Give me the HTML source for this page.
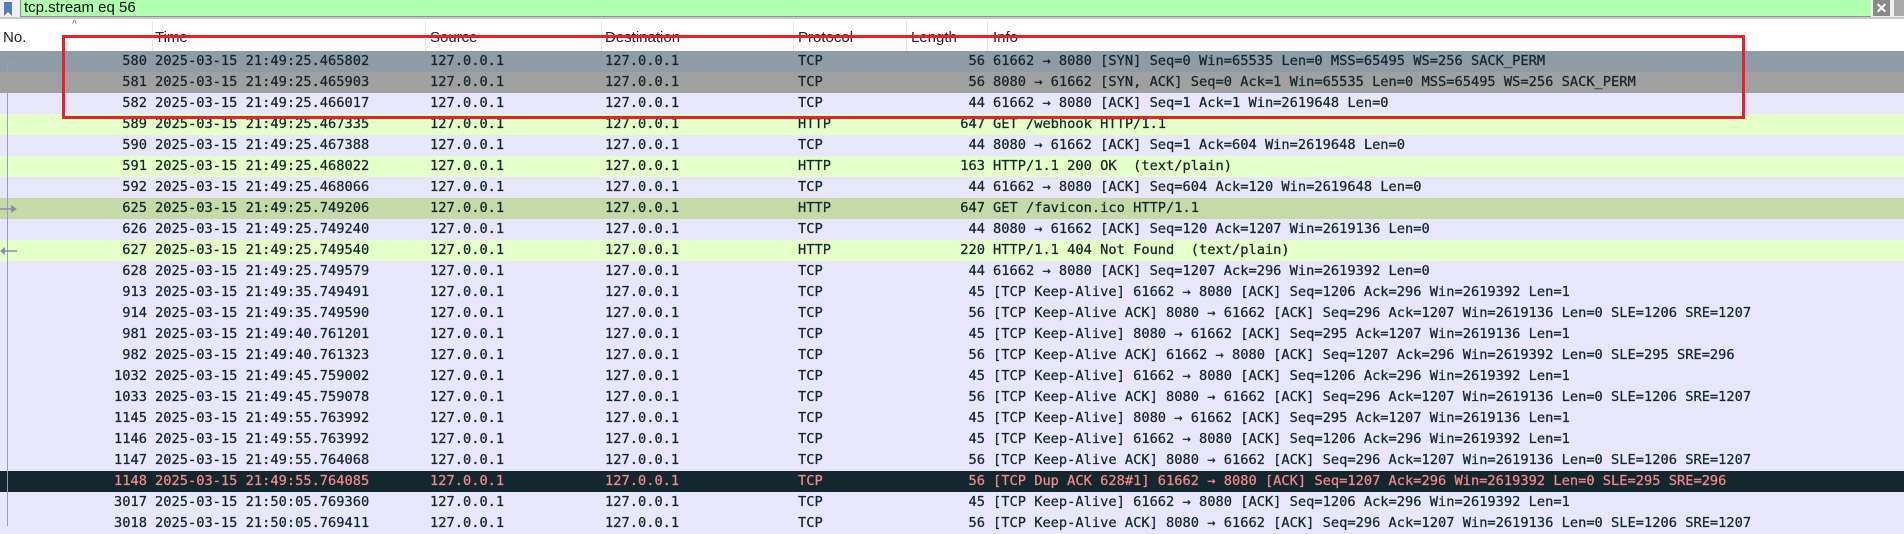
<!DOCTYPE html>
<html><head><meta charset="utf-8"><style>
*{margin:0;padding:0;box-sizing:border-box}
body{width:1904px;height:526px;overflow:hidden;background:#e7e6fa;position:relative;font-family:"DejaVu Sans Mono","Liberation Mono",monospace}
#fb{position:absolute;left:0;top:0;width:1904px;height:19px;background:#f0f0f0;border-bottom:2px solid #c8c8d0}
#fin{position:absolute;left:20px;top:0;width:1851px;height:17px;background:#afffaf;border-bottom:1px solid #909090;border-left:1px solid #909090;font:15px "Liberation Sans",sans-serif;color:#111;padding-left:3px;line-height:16px}
#hdr{position:absolute;left:0;top:19px;width:1904px;height:32px;background:#fff;font:15px "Liberation Sans",sans-serif;color:#222}
.h{position:absolute;top:10px}
.sep{position:absolute;top:2px;width:1px;height:30px;background:#e6e6e6}
.r{position:absolute;left:0;width:1904px;height:21px;font-size:13.7px;line-height:21px;color:#12272e;white-space:pre;-webkit-text-stroke:0.25px}
.r span{position:absolute;top:0}
.n{right:1757px;text-align:right}
</style></head><body>
<div id="fb">
<svg style="position:absolute;left:2px;top:1px" width="12" height="16"><path d="M2 1h8v14l-4-4-4 4z" fill="#4f7fc0"/></svg>
<div id="fin">tcp.stream eq 56</div>
<div style="position:absolute;left:1873px;top:0;width:17px;height:16px;background:#8a8a8a;color:#fff;font:bold 14px 'Liberation Sans',sans-serif;text-align:center;line-height:16px">✕</div>
<div style="position:absolute;left:1894px;top:0;width:10px;height:16px;background:#aaa"></div>
</div>
<div id="hdr">
<div class="h" style="left:3px">No.</div>
<div style="position:absolute;left:72px;top:0;font-size:10px;color:#666">^</div>
<div class="sep" style="left:152px"></div><div class="h" style="left:155px">Time</div>
<div class="sep" style="left:425px"></div><div class="h" style="left:430px">Source</div>
<div class="sep" style="left:601px"></div><div class="h" style="left:605px">Destination</div>
<div class="sep" style="left:793px"></div><div class="h" style="left:798px">Protocol</div>
<div class="sep" style="left:906px"></div><div class="h" style="left:911px">Length</div>
<div class="sep" style="left:987px"></div><div class="h" style="left:993px">Info</div>
</div>
<div id="rows"></div>
<div style="position:absolute;left:7px;top:63px;width:1px;height:463px;background:#9c9cb4"></div>
<div style="position:absolute;left:7px;top:62px;width:9px;height:1px;background:#9c9cb4"></div>
<svg style="position:absolute;left:0;top:204px" width="18" height="10"><path d="M0 5h12" stroke="#8c8ca0" stroke-width="1.5"/><path d="M11 1l6 4-6 4z" fill="#8c8ca0"/></svg>
<svg style="position:absolute;left:0;top:246px" width="18" height="10"><path d="M4 5h13" stroke="#8c8ca0" stroke-width="1.5"/><path d="M5 1l-5 4 5 4z" fill="#8c8ca0"/></svg>
<div style="position:absolute;left:62px;top:35px;width:1683px;height:84px;border:3px solid #e8202a"></div>
<script>
var d=[
["580","21:49:25.465802","TCP","56","61662 → 8080 [SYN] Seq=0 Win=65535 Len=0 MSS=65495 WS=256 SACK_PERM","#8f9ba5"],
["581","21:49:25.465903","TCP","56","8080 → 61662 [SYN, ACK] Seq=0 Ack=1 Win=65535 Len=0 MSS=65495 WS=256 SACK_PERM","#a0a0a0"],
["582","21:49:25.466017","TCP","44","61662 → 8080 [ACK] Seq=1 Ack=1 Win=2619648 Len=0","#e7e6fa"],
["589","21:49:25.467335","HTTP","647","GET /webhook HTTP/1.1","#e4ffc7"],
["590","21:49:25.467388","TCP","44","8080 → 61662 [ACK] Seq=1 Ack=604 Win=2619648 Len=0","#e7e6fa"],
["591","21:49:25.468022","HTTP","163","HTTP/1.1 200 OK  (text/plain)","#e4ffc7"],
["592","21:49:25.468066","TCP","44","61662 → 8080 [ACK] Seq=604 Ack=120 Win=2619648 Len=0","#e7e6fa"],
["625","21:49:25.749206","HTTP","647","GET /favicon.ico HTTP/1.1","#c4dba8"],
["626","21:49:25.749240","TCP","44","8080 → 61662 [ACK] Seq=120 Ack=1207 Win=2619136 Len=0","#e7e6fa"],
["627","21:49:25.749540","HTTP","220","HTTP/1.1 404 Not Found  (text/plain)","#e4ffc7"],
["628","21:49:25.749579","TCP","44","61662 → 8080 [ACK] Seq=1207 Ack=296 Win=2619392 Len=0","#e7e6fa"],
["913","21:49:35.749491","TCP","45","[TCP Keep-Alive] 61662 → 8080 [ACK] Seq=1206 Ack=296 Win=2619392 Len=1","#e7e6fa"],
["914","21:49:35.749590","TCP","56","[TCP Keep-Alive ACK] 8080 → 61662 [ACK] Seq=296 Ack=1207 Win=2619136 Len=0 SLE=1206 SRE=1207","#e7e6fa"],
["981","21:49:40.761201","TCP","45","[TCP Keep-Alive] 8080 → 61662 [ACK] Seq=295 Ack=1207 Win=2619136 Len=1","#e7e6fa"],
["982","21:49:40.761323","TCP","56","[TCP Keep-Alive ACK] 61662 → 8080 [ACK] Seq=1207 Ack=296 Win=2619392 Len=0 SLE=295 SRE=296","#e7e6fa"],
["1032","21:49:45.759002","TCP","45","[TCP Keep-Alive] 61662 → 8080 [ACK] Seq=1206 Ack=296 Win=2619392 Len=1","#e7e6fa"],
["1033","21:49:45.759078","TCP","56","[TCP Keep-Alive ACK] 8080 → 61662 [ACK] Seq=296 Ack=1207 Win=2619136 Len=0 SLE=1206 SRE=1207","#e7e6fa"],
["1145","21:49:55.763992","TCP","45","[TCP Keep-Alive] 8080 → 61662 [ACK] Seq=295 Ack=1207 Win=2619136 Len=1","#e7e6fa"],
["1146","21:49:55.763992","TCP","45","[TCP Keep-Alive] 61662 → 8080 [ACK] Seq=1206 Ack=296 Win=2619392 Len=1","#e7e6fa"],
["1147","21:49:55.764068","TCP","56","[TCP Keep-Alive ACK] 8080 → 61662 [ACK] Seq=296 Ack=1207 Win=2619136 Len=0 SLE=1206 SRE=1207","#e7e6fa"],
["1148","21:49:55.764085","TCP","56","[TCP Dup ACK 628#1] 61662 → 8080 [ACK] Seq=1207 Ack=296 Win=2619392 Len=0 SLE=295 SRE=296","#12272e"],
["3017","21:50:05.769360","TCP","45","[TCP Keep-Alive] 61662 → 8080 [ACK] Seq=1206 Ack=296 Win=2619392 Len=1","#e7e6fa"],
["3018","21:50:05.769411","TCP","56","[TCP Keep-Alive ACK] 8080 → 61662 [ACK] Seq=296 Ack=1207 Win=2619136 Len=0 SLE=1206 SRE=1207","#e7e6fa"]];
var h="";
d.forEach(function(r,i){
var c=r[5]=="#12272e"?"color:#f78787;":"";
h+='<div class="r" style="top:'+(51+21*i)+'px;background:'+r[5]+';'+c+'">'+
'<span class="n">'+r[0]+'</span><span style="left:155px">2025-03-15 '+r[1]+'</span>'+
'<span style="left:430px">127.0.0.1</span><span style="left:605px">127.0.0.1</span>'+
'<span style="left:798px">'+r[2]+'</span><span style="right:919px">'+r[3]+'</span>'+
'<span style="left:993px">'+r[4]+'</span></div>';});
document.getElementById("rows").innerHTML=h;
</script>
</body></html>
